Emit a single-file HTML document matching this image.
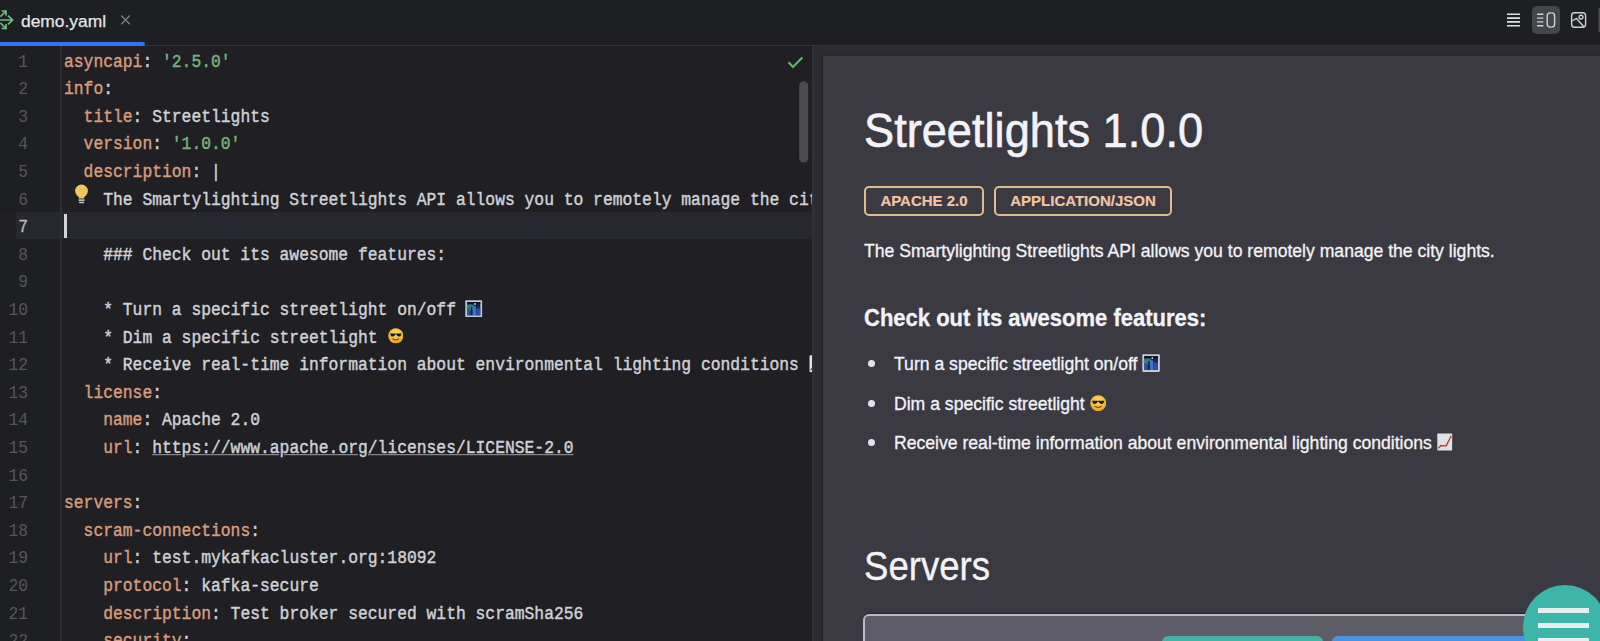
<!DOCTYPE html>
<html><head><meta charset="utf-8">
<style>
*{margin:0;padding:0;box-sizing:border-box}
html,body{width:1600px;height:641px;overflow:hidden;background:#1e1f22}
body{position:relative;font-family:"Liberation Sans",sans-serif}
.abs{position:absolute}
#tabs{left:0;top:0;width:1600px;height:45px;background:#1e1f22}
#tabline{left:0;top:45px;width:1600px;height:1px;background:#333439}
#tabul{left:0;top:42px;width:145px;height:4px;background:#3574f0;border-radius:0 2px 2px 0}
#tabtxt{left:21px;top:9.5px;font-size:17.4px;color:#e4e5e9;-webkit-text-stroke:0.25px currentColor;line-height:22px}
#tabx{left:119px;top:11px;width:12px;height:12px}
#editor{left:0;top:46px;width:812px;height:595px;background:#1f1f24;overflow:hidden}
#gutline{left:60px;top:0;width:1.6px;height:595px;background:#2c2e32;z-index:2}
.row{position:absolute;left:0;width:812px;height:27.6px}
.ln{position:absolute;top:2.6px;right:784px;transform:scaleY(1.12);transform-origin:0 18.15px;font-family:"Liberation Mono",monospace;font-size:16.33px;color:#55575c;line-height:27.6px;text-align:right}
.code{position:absolute;top:2.6px;left:64px;-webkit-text-stroke:0.4px currentColor;transform:scaleY(1.12);transform-origin:0 18.15px;white-space:pre;font-family:"Liberation Mono",monospace;font-size:16.33px;color:#d0d1d6;line-height:27.6px}
.k{color:#d69c7a}
.s{color:#76b37c}
.u{text-decoration:underline;text-decoration-color:#8c8f96}
#preview{left:812px;top:46px;width:788px;height:595px;background:#2c2b30;border-left:2px solid #313136}
#pv{left:823px;top:56px;width:777px;height:585px;background:#3b3a43;overflow:hidden;box-shadow:-1px 0 2px rgba(0,0,0,0.25)}
.pt{position:absolute;color:#f3f2f7;white-space:nowrap;-webkit-text-stroke:0.3px currentColor}
.bt{transform:scaleY(1.06);transform-origin:0 18.1px}
.bul{position:absolute;left:45px;width:7px;height:7px;border-radius:50%;background:#e4e3ea}
.badge{position:absolute;top:186px;height:30px;border:2px solid #dfbb8c;border-radius:5px;color:#f2c49f;-webkit-text-stroke:0.2px currentColor;font-weight:bold;font-size:15px;line-height:26px;text-align:center}
</style></head><body>
<svg width="0" height="0" style="position:absolute">
<defs>
 <linearGradient id="ngt" x1="0" y1="0" x2="0" y2="1"><stop offset="0" stop-color="#0d1a33"/><stop offset="1" stop-color="#1e3f86"/></linearGradient>
 <radialGradient id="fce" cx="0.5" cy="0.35" r="0.6"><stop offset="0" stop-color="#ffe070"/><stop offset="1" stop-color="#eaa623"/></radialGradient>
 <symbol id="e-night" viewBox="0 0 18 18">
  <rect x="0.3" y="0.3" width="17.4" height="17.4" rx="1" fill="#c5cad0"/>
  <rect x="2.2" y="2.2" width="13.6" height="13.6" fill="url(#ngt)"/>
  <ellipse cx="5.5" cy="7.5" rx="4" ry="3.2" fill="#3aa08c" opacity="0.75"/>
  <rect x="2.2" y="9" width="3" height="6.8" fill="#2b55ad"/>
  <rect x="6" y="7" width="1.6" height="8.8" fill="#16284e"/>
  <rect x="8" y="6.4" width="3.2" height="9.4" fill="#3f72d2"/>
  <rect x="11.8" y="8.6" width="4" height="7.2" fill="#2a50a0"/>
  <rect x="2.2" y="2.2" width="13.6" height="1.8" fill="#0a1326"/>
  <circle cx="10.2" cy="4" r="0.9" fill="#e6ecf2"/>
 </symbol>
 <symbol id="e-cool" viewBox="0 0 16 16">
  <circle cx="8" cy="8" r="7.8" fill="url(#fce)"/>
  <path d="M2 5.6 H14 L13.4 7.2 Q12.6 9.2 10.6 8.6 Q9 8.1 8.6 6.6 H7.4 Q7 8.1 5.4 8.6 Q3.4 9.2 2.6 7.2Z" fill="#1c1c22"/>
  <path d="M5 11 Q8 13.4 11 11" stroke="#8a4b10" stroke-width="1.1" fill="none" stroke-linecap="round"/>
 </symbol>
 <symbol id="e-chart" viewBox="0 0 16 18">
  <rect x="0.3" y="0.3" width="15.4" height="17.4" rx="0.8" fill="#dde2e7"/>
  <path d="M1.4 15.6 L4 12.6 L9.4 13 L14.6 2.6" stroke="#c2332b" stroke-width="1.3" fill="none" stroke-linejoin="round"/>
 </symbol>
</defs></svg>
<div id="tabs" class="abs"></div>
<div id="tabline" class="abs"></div>
<div id="tabul" class="abs"></div>
<div id="tabtxt" class="abs">demo.yaml</div>

<svg class="abs" style="left:0;top:0" width="160" height="45" viewBox="0 0 160 45">
 <g fill="none" stroke="#74b980" stroke-width="1.7" stroke-linecap="square">
  <path d="M-1 20H12.2M8.6 16.2L12.6 20L8.6 23.8"/>
  <path d="M1 16L6 11M2.4 11H6V14.6"/>
  <path d="M1 23.5L6 28.5M6 24.9V28.5H2.4"/>
 </g>
 <path d="M121.2 15.6L129.8 24.2M129.8 15.6L121.2 24.2" stroke="#7c7e83" stroke-width="1.4" fill="none"/>
</svg>
<div class="abs" style="left:1532px;top:6px;width:28px;height:28px;border-radius:5px;background:#45464b"></div>
<svg class="abs" style="left:1500px;top:0" width="100" height="45" viewBox="0 0 100 45">
 <g stroke="#dfe1e5" stroke-width="1.6" fill="none">
  <path d="M7 14.3H20M7 18.1H20M7 21.9H20M7 25.7H20"/>
 </g>
 <g stroke="#ced0d6" stroke-width="1.4" fill="none">
  <path d="M37 14.3H43.4M37 18.1H43.4M37 21.9H43.4M37 25.7H43.4"/>
  <rect x="47.2" y="12.9" width="7.4" height="14.2" rx="3"/>
  <rect x="71.6" y="12.7" width="14" height="14.6" rx="3"/>
  <path d="M72 21L76.5 18.5L84 27"/>
  <circle cx="81" cy="17.1" r="1.9"/>
 </g>
 <rect x="98.5" y="8" width="2" height="24" fill="#4a4b4f"/>
</svg>

<div id="editor" class="abs">
<div class="abs" style="left:0;top:0;width:16px;height:595px;background:#1d1e21"></div><div class="abs" style="left:16px;top:0;width:44px;height:595px;background:#1e1f22"></div><div id="gutline" class="abs"></div>
<div class="row" style="top:0"><span class="ln">1</span><span class="code"><span class="k">asyncapi</span>: <span class="s">'2.5.0'</span></span></div>
<div class="row" style="top:27.6px"><span class="ln">2</span><span class="code"><span class="k">info</span>:</span></div>
<div class="row" style="top:55.2px"><span class="ln">3</span><span class="code">  <span class="k">title</span>: Streetlights</span></div>
<div class="row" style="top:82.8px"><span class="ln">4</span><span class="code">  <span class="k">version</span>: <span class="s">'1.0.0'</span></span></div>
<div class="row" style="top:110.4px"><span class="ln">5</span><span class="code">  <span class="k">description</span>: |</span></div>
<div class="row" style="top:138px"><span class="ln">6</span><span class="code">    The Smartylighting Streetlights API allows you to remotely manage the city lights.</span></div>
<div class="row" style="top:165.6px;background:linear-gradient(90deg,#1f1f24 0,#1f1f24 16px,#26272f 16px)"><span class="ln" style="color:#b9bbc1;-webkit-text-stroke:0.3px currentColor">7</span><span class="code"></span></div>
<div class="row" style="top:193.2px"><span class="ln">8</span><span class="code">    ### Check out its awesome features:</span></div>
<div class="row" style="top:220.8px"><span class="ln">9</span><span class="code"></span></div>
<div class="row" style="top:248.4px"><span class="ln">10</span><span class="code">    * Turn a specific streetlight on/off </span></div>
<div class="row" style="top:276px"><span class="ln">11</span><span class="code">    * Dim a specific streetlight </span></div>
<div class="row" style="top:303.6px"><span class="ln">12</span><span class="code">    * Receive real-time information about environmental lighting conditions </span></div>
<div class="row" style="top:331.2px"><span class="ln">13</span><span class="code">  <span class="k">license</span>:</span></div>
<div class="row" style="top:358.8px"><span class="ln">14</span><span class="code">    <span class="k">name</span>: Apache 2.0</span></div>
<div class="row" style="top:386.4px"><span class="ln">15</span><span class="code">    <span class="k">url</span>: <span class="u">https://www.apache.org/licenses/LICENSE-2.0</span></span></div>
<div class="row" style="top:414px"><span class="ln">16</span><span class="code"></span></div>
<div class="row" style="top:441.6px"><span class="ln">17</span><span class="code"><span class="k">servers</span>:</span></div>
<div class="row" style="top:469.2px"><span class="ln">18</span><span class="code">  <span class="k">scram-connections</span>:</span></div>
<div class="row" style="top:496.8px"><span class="ln">19</span><span class="code">    <span class="k">url</span>: test.mykafkacluster.org:18092</span></div>
<div class="row" style="top:524.4px"><span class="ln">20</span><span class="code">    <span class="k">protocol</span>: kafka-secure</span></div>
<div class="row" style="top:552px"><span class="ln">21</span><span class="code">    <span class="k">description</span>: Test broker secured with scramSha256</span></div>
<div class="row" style="top:579.6px"><span class="ln">22</span><span class="code">    <span class="k">security</span>:</span></div>

<svg class="abs" style="left:780px;top:0" width="32" height="180" viewBox="780 46 32 180">
 <path d="M788.5 62.2L793 67L802.3 57.6" fill="none" stroke="#62b36c" stroke-width="2.2"/>
 <rect x="799.2" y="81.3" width="9" height="81.3" rx="4.5" fill="#4b4c50"/>
</svg>
<svg class="abs" style="left:70px;top:138px" width="24" height="27.6" viewBox="70 184 24 27.6">
 <circle cx="81.5" cy="191" r="6.4" fill="#f2c55c"/>
 <path d="M78 193.5 Q79 197 78.8 198.6 H84.2 Q84 197 85 193.5Z" fill="#f2c55c"/>
 <rect x="78.6" y="199.4" width="6" height="1.5" fill="#cfd0d6"/>
 <rect x="79.1" y="201.8" width="5" height="1.4" fill="#cfd0d6"/>
</svg>
<svg class="abs" style="left:465px;top:253.5px" width="17.5" height="17.5"><use href="#e-night"/></svg>
<svg class="abs" style="left:387.8px;top:282px" width="15.6" height="15.6"><use href="#e-cool"/></svg>
<svg class="abs" style="left:808.5px;top:309px" width="16" height="17.5"><use href="#e-chart"/></svg>
<div class="abs" style="left:64px;top:168px;width:3px;height:23.5px;background:#d2d4da;z-index:3"></div>
</div>

<div id="preview" class="abs"></div>
<div id="pv" class="abs">
<div class="pt" style="left:41px;top:43px;font-size:45.2px;line-height:60px;transform:scaleY(1.06);transform-origin:0 0;-webkit-text-stroke:0.6px currentColor">Streetlights 1.0.0</div>
<div class="badge" style="left:41px;top:130px;width:120px">APACHE 2.0</div>
<div class="badge" style="left:171px;top:130px;width:178px">APPLICATION/JSON</div>
<div class="pt bt" style="left:41px;top:183px;font-size:17.6px;line-height:24px">The Smartylighting Streetlights API allows you to remotely manage the city lights.</div>
<div class="pt" style="left:41px;top:248px;font-size:22px;line-height:28px;font-weight:bold;transform:scaleY(1.08);transform-origin:0 21.6px;top:248.5px">Check out its awesome features:</div>

<div class="bul" style="top:304px"></div>
<div class="pt bt" style="left:71px;top:296px;font-size:17.6px;line-height:24px">Turn a specific streetlight on/off</div>
<div class="bul" style="top:343.5px"></div>
<div class="pt bt" style="left:71px;top:335.5px;font-size:17.6px;line-height:24px">Dim a specific streetlight</div>
<div class="bul" style="top:383px"></div>
<div class="pt bt" style="left:71px;top:375px;font-size:17.6px;line-height:24px">Receive real-time information about environmental lighting conditions</div>
<svg class="abs" style="left:318.5px;top:297.5px" width="18.2" height="18.2"><use href="#e-night"/></svg>
<svg class="abs" style="left:266.5px;top:338.6px" width="16.4" height="16.4"><use href="#e-cool"/></svg>
<svg class="abs" style="left:614.3px;top:376.8px" width="15.6" height="18"><use href="#e-chart"/></svg>
<div class="pt" style="left:41px;top:488px;font-size:36.6px;line-height:48px;transform:scaleY(1.1);transform-origin:0 36.8px">Servers</div>
<div class="abs" style="left:40px;top:558px;width:760px;height:60px;background:#5e5c66;border:2px solid #bcbac2;border-radius:6px;box-shadow:0 -1px 0 #25242a"></div>
<div class="abs" style="left:339px;top:580px;width:161px;height:30px;background:#42b3a5;border-radius:6px"></div>
<div class="abs" style="left:509px;top:580px;width:260px;height:30px;background:#4a93e0;border-radius:6px"></div>
<div class="abs" style="left:700px;top:529px;width:84px;height:84px;border-radius:50%;background:#3db5a8"></div>
<div class="abs" style="left:715px;top:552px;width:51px;height:5px;background:#e6eef0"></div>
<div class="abs" style="left:715px;top:567px;width:51px;height:5px;background:#e6eef0"></div>
<div class="abs" style="left:715px;top:582px;width:51px;height:5px;background:#e6eef0"></div>
</div>
</body></html>
